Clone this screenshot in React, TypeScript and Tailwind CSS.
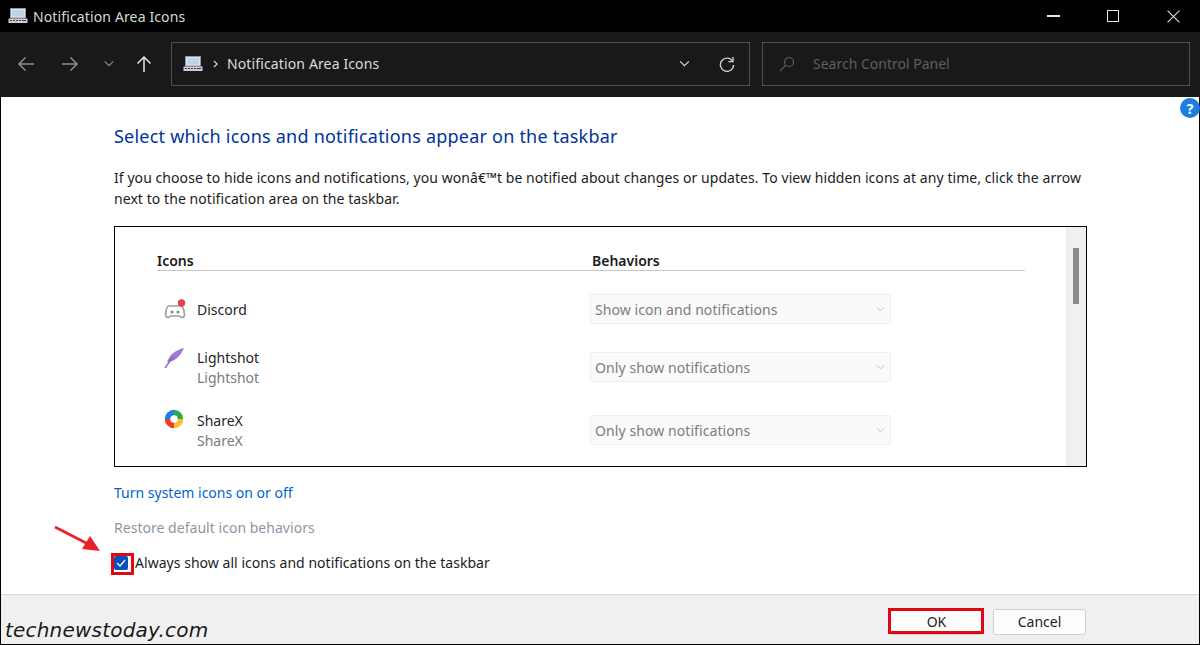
const font = "[font-family:'Noto_Sans',sans-serif]";

function CpIcon({ className }: { className?: string }) {
  return (
    <svg viewBox="0 0 20 16" className={className}>
      <rect x="2.5" y="0.5" width="15" height="9.5" fill="#dfe6ee" stroke="#8d96a3" />
      <rect x="4" y="2" width="12" height="6.5" fill="#c3d2e6" />
      <rect x="0.5" y="10.5" width="19" height="4.5" fill="#c9ced6" />
      <path d="M2 12.5h2M5 12.5h2M8 12.5h2M11 12.5h2M14 12.5h4" stroke="#3a3f47" strokeWidth="1.2" />
    </svg>
  );
}

function Chevron({ className, color = "#c8c8c8" }: { className?: string; color?: string }) {
  return (
    <svg viewBox="0 0 12 8" className={className} fill="none" stroke={color} strokeWidth="1.3">
      <path d="M1 1.5 6 6.5 11 1.5" />
    </svg>
  );
}

function Behavior({ label, className }: { label: string; className: string }) {
  return (
    <div
      className={`absolute left-[475px] flex h-[30px] w-[301px] items-center justify-between rounded-[2px] border border-[#eeeeee] bg-[#fafafa] pl-[4px] pr-[3px] text-[14px] tracking-[0.08px] text-[#7d7d7d] ${className}`}
    >
      <span>{label}</span>
      <Chevron className="mr-[1px] h-[6px] w-[11px]" color="#c4c4c4" />
    </div>
  );
}

function AppRow({ name, sub, icon, className }: { name: string; sub?: string; icon: React.ReactNode; className: string }) {
  return (
    <div className={`absolute left-[49px] flex ${className}`}>
      <div className="h-[20px] w-[22px]">{icon}</div>
      <div className="ml-[11px] text-[14px] leading-[20px]">
        <div className="text-[#262626]">{name}</div>
        {sub && <div className="text-[#7b7b7b]">{sub}</div>}
      </div>
    </div>
  );
}

export default function App() {
  return (
    <div className={`relative flex h-[645px] w-[1200px] flex-col overflow-hidden bg-white ${font}`}>
      {/* Title bar */}
      <div className="flex h-[32px] items-center bg-black pl-[8px] text-[#d8d8d8]">
        <CpIcon className="h-[16px] w-[20px]" />
        <span className="ml-[5px] text-[14px] tracking-[0.13px]">Notification Area Icons</span>
        <div className="ml-auto flex items-center pr-[20px]">
          <div className="h-[1.5px] w-[13px] bg-[#e8e8e8]" />
          <div className="ml-[47px] h-[12px] w-[12px] border border-[#e8e8e8]" />
          <svg viewBox="0 0 12 12" className="ml-[48px] h-[13px] w-[13px]" fill="none" stroke="#e0e0e0">
            <path d="M0.5 0.5 11.5 11.5M11.5 0.5 0.5 11.5" />
          </svg>
        </div>
      </div>

      {/* Toolbar */}
      <div className="flex h-[65px] items-center bg-[#191919] pb-[2px]">
        <svg viewBox="0 0 18 16" className="ml-[17px] h-[16px] w-[18px]" fill="none" stroke="#8c8c8c" strokeWidth="1.5">
          <path d="M17 8H2M8.5 1.5 2 8l6.5 6.5" />
        </svg>
        <svg viewBox="0 0 18 16" className="ml-[26px] h-[16px] w-[18px]" fill="none" stroke="#8c8c8c" strokeWidth="1.5">
          <path d="M1 8h15M9.5 1.5 16 8l-6.5 6.5" />
        </svg>
        <Chevron className="ml-[24px] h-[7px] w-[12px]" color="#8c8c8c" />
        <svg viewBox="0 0 16 18" className="ml-[21px] h-[18px] w-[16px]" fill="none" stroke="#e6e6e6" strokeWidth="1.5">
          <path d="M8 17V2M1.5 8.5 8 2l6.5 6.5" />
        </svg>
        <div className="ml-[19px] flex h-[44px] w-[579px] items-center border border-[#4f4f4f] pl-[11px] pr-[14px] text-[14px] text-[#dcdcdc]">
          <CpIcon className="h-[16px] w-[20px]" />
          <svg viewBox="0 0 6 10" className="ml-[10px] h-[8px] w-[5px]" fill="none" stroke="#dcdcdc" strokeWidth="1.5">
            <path d="M1 1l4 4-4 4" />
          </svg>
          <span className="ml-[9px] tracking-[0.13px]">Notification Area Icons</span>
          <Chevron className="ml-auto h-[7px] w-[13px]" color="#dcdcdc" />
          <svg viewBox="0 0 16 16" className="ml-[28px] h-[16px] w-[16px]" fill="none" stroke="#cfcfcf" strokeWidth="1.4">
            <path d="M13.6 5.2A6.6 6.6 0 1 0 14.6 9" />
            <path d="M14 1v4.6H9.4" />
          </svg>
        </div>
        <div className="ml-[12px] flex h-[44px] w-[428px] items-center border border-[#4f4f4f] pl-[16px] text-[14px] text-[#5f5f5f]">
          <svg viewBox="0 0 16 16" className="h-[16px] w-[16px]" fill="none" stroke="#5f5f5f" strokeWidth="1.2">
            <circle cx="10" cy="6" r="4.5" />
            <path d="M6.8 9.2 1 15" />
          </svg>
          <span className="ml-[18px]">Search Control Panel</span>
        </div>
      </div>

      {/* Window body */}
      <div className="flex flex-1 flex-col border-b border-x border-black">
        <div className="flex flex-1 flex-col pl-[113px]">
          <h1 className="mt-[26px] text-[18px] leading-[26px] tracking-[0.22px] text-[#003399]">
            Select which icons and notifications appear on the taskbar
          </h1>
          <p className="mt-[18px] w-[985px] text-[14px] leading-[21px] tracking-[0.065px] text-[#1c1c1c]">
            If you choose to hide icons and notifications, you wonâ€™t be notified about changes or updates. To view hidden
            icons at any time, click the arrow next to the notification area on the taskbar.
          </p>

          {/* Icon list */}
          <div className="relative mt-[17px] h-[241px] w-[973px] border border-black">
            <div className="absolute left-[42px] top-[24px] flex h-[20px] w-[868px] items-center border-b border-[#c8c8c8] pb-[1px] text-[14px] font-semibold text-[#1a1a1a]">
              <span>Icons</span>
              <span className="absolute left-[435px]">Behaviors</span>
            </div>

            <AppRow
              name="Discord"
              className="top-[73px]"
              icon={
                <svg viewBox="0 0 22 20" className="-mt-[1px] h-[20px] w-[22px]">
                  <path d="M5 7h11c2 0 3.5 2 4 5l.5 4c0 1.500-1.500 2.500-3 2.500l-2-1.500H6.500l-2 1.500c-1.500 0-3-1-3-2.500l.5-4c.5-3 1-5 3-5z" fill="#fff" stroke="#a0a0a0" strokeWidth="1.7" />
                  <circle cx="8" cy="13" r="1.600" fill="#8a8a8a" />
                  <circle cx="14" cy="13" r="1.600" fill="#8a8a8a" />
                  <circle cx="17.500" cy="4" r="3.700" fill="#e5404a" />
                </svg>
              }
            />
            <AppRow
              name="Lightshot"
              sub="Lightshot"
              className="top-[121px]"
              icon={
                <svg viewBox="0 0 22 20" className="h-[20px] w-[22px]">
                  <path d="M20 0C12 2 6 6 3 14c4 0 12-2 17-14z" fill="#a07ad0" />
                  <path d="M1 20 9 9" stroke="#8a5fc4" strokeWidth="1.4" />
                </svg>
              }
            />
            <AppRow
              name="ShareX"
              sub="ShareX"
              className="top-[184px]"
              icon={
                <svg viewBox="0 0 20 20" className="-mt-[2px] h-[20px] w-[20px]" fill="none" strokeWidth="5.500">
                  <path d="M10 3.500A6.500 6.500 0 0 1 16.500 10" stroke="#2fa84f" />
                  <path d="M16.500 10A6.500 6.500 0 0 1 10 16.500" stroke="#fbc02d" />
                  <path d="M10 16.500A6.500 6.500 0 0 1 3.500 10" stroke="#ea3f2e" />
                  <path d="M3.500 10A6.500 6.500 0 0 1 10 3.500" stroke="#1e7fe0" />
                  <circle cx="10.500" cy="10" r="2.200" fill="#fff" stroke="none" />
                </svg>
              }
            />

            <Behavior label="Show icon and notifications" className="top-[67px]" />
            <Behavior label="Only show notifications" className="top-[125px]" />
            <Behavior label="Only show notifications" className="top-[188px]" />

            {/* Scrollbar */}
            <div className="absolute bottom-0 right-0 top-0 w-[20px] bg-[#f0f0f0]">
              <div className="ml-[7px] mt-[21px] h-[56px] w-[6px] bg-[#8a8a8a]" />
            </div>
          </div>

          <div className="mt-[16px] text-[14px] leading-[20px] text-[#0066cc]">Turn system icons on or off</div>
          <div className="mt-[15px] text-[14px] leading-[20px] tracking-[0.03px] text-[#8b97a5]">Restore default icon behaviors</div>
          <label className="mt-[14px] flex h-[20px] items-center text-[14px] tracking-[0.04px] text-[#1c1c1c]">
            <div className="mt-[2px] flex h-[14px] w-[14px] items-center justify-center rounded-[2px] bg-[#0a52b8]">
              <svg viewBox="0 0 10 8" className="h-[8px] w-[10px]" fill="none" stroke="#fff" strokeWidth="1.2">
                <path d="M1 4l3 3 5-6" />
              </svg>
            </div>
            <span className="ml-[7px]">Always show all icons and notifications on the taskbar</span>
          </label>
        </div>

        {/* Footer */}
        <div className="flex h-[50px] items-start justify-end border-t border-[#d8d8d8] bg-[#f0f0f0] pr-[113px] pt-[14px] text-[14px] leading-[22px] text-[#1c1c1c]">
          <button className="h-[26px] w-[93px] rounded-[3px] border border-[#d0d0d0] bg-[#fdfdfd] pb-[1px]">OK</button>
          <button className="ml-[10px] h-[26px] w-[93px] rounded-[3px] border border-[#d0d0d0] bg-[#fdfdfd] pb-[1px]">Cancel</button>
        </div>
      </div>

      {/* Help badge */}
      <div className="absolute left-[1180px] top-[98px] flex h-[20px] w-[20px] items-center justify-center rounded-full bg-[#1c7fe0] text-[14px] font-bold text-white">
        ?
      </div>

      {/* Annotations */}
      <svg viewBox="0 0 48 30" className="absolute left-[54px] top-[525px] h-[30px] w-[48px]">
        <path d="M1 2 36 20" stroke="#e8202a" strokeWidth="2.600" fill="none" />
        <path d="M46 26 28 24 36 11z" fill="#e8202a" />
      </svg>
      <div className="absolute left-[111px] top-[553px] h-[22px] w-[23px] border-[3px] border-[#e00814]" />
      <div className="absolute left-[888px] top-[608px] h-[26px] w-[96px] border-[3px] border-[#e00814]" />
      <div className="absolute left-[5px] top-[617px] [font-family:'DejaVu_Sans',sans-serif] text-[20px] italic leading-[26px] tracking-[0.2px] text-[#1a1a1a]">
        technewstoday.com
      </div>
    </div>
  );
}
